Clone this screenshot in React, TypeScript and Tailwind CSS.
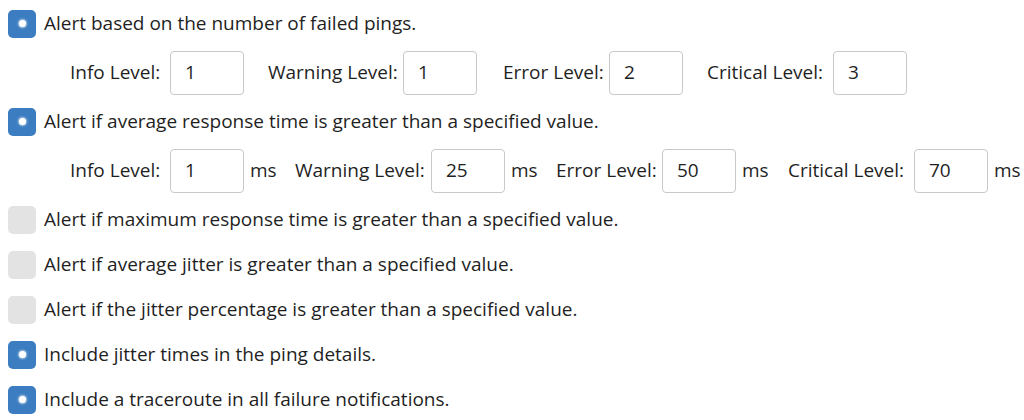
import React from "react";

function Check({ on }: { on: boolean }) {
  return on ? (
    <span className="flex h-[28px] w-[28px] shrink-0 items-center justify-center rounded-[5px] bg-[#3b7dc0]">
      <span className="h-[7px] w-[7px] rounded-full bg-white shadow-[0_0_2px_1px_rgba(255,255,255,0.6)]" />
    </span>
  ) : (
    <span className="h-[28px] w-[28px] shrink-0 rounded-[5px] bg-[#e3e3e3]" />
  );
}

function CheckRow({ on, text }: { on: boolean; text: string }) {
  return (
    <div className="flex h-[45px] items-center gap-[8px] pl-[8px]">
      <Check on={on} />
      <span>{text}</span>
    </div>
  );
}

function Box({ v }: { v: string }) {
  return (
    <span className="flex h-[44px] w-[74px] shrink-0 items-center rounded-[4px] border border-[#c9c9c9] bg-white pl-[14px]">
      {v}
    </span>
  );
}

function Field({ label, w, v, ms, msw }: { label: string; w: number; v: string; ms?: boolean; msw?: number }) {
  return (
    <div className="flex items-center">
      <span className="shrink-0 whitespace-nowrap" style={{ width: w }}>{label}</span>
      <Box v={v} />
      {ms && (
        <span className="shrink-0 pl-[6px]" style={{ width: msw }}>ms</span>
      )}
    </div>
  );
}

export default function App() {
  return (
    <div
      className="h-[420px] w-[1024px] overflow-hidden bg-white pt-[1px] text-[19px] text-[#1f1f1f]"
      style={{ fontFamily: '"Open Sans", "Noto Sans", sans-serif' }}
    >
      <CheckRow on text="Alert based on the number of failed pings." />
      <div className="flex h-[53px] items-center pl-[70px]">
        <Field label="Info Level:" w={100} v="1" />
        <div className="w-[24px]" />
        <Field label="Warning Level:" w={135} v="1" />
        <div className="w-[26px]" />
        <Field label="Error Level:" w={106} v="2" />
        <div className="w-[24px]" />
        <Field label="Critical Level:" w={126} v="3" />
      </div>
      <CheckRow on text="Alert if average response time is greater than a specified value." />
      <div className="flex h-[53px] items-center pl-[70px]">
        <Field label="Info Level:" w={100} v="1" ms msw={51} />
        <Field label="Warning Level:" w={136} v="25" ms msw={51} />
        <Field label="Error Level:" w={106} v="50" ms msw={52} />
        <Field label="Critical Level:" w={126} v="70" ms msw={40} />
      </div>
      <CheckRow on={false} text="Alert if maximum response time is greater than a specified value." />
      <CheckRow on={false} text="Alert if average jitter is greater than a specified value." />
      <CheckRow on={false} text="Alert if the jitter percentage is greater than a specified value." />
      <CheckRow on text="Include jitter times in the ping details." />
      <CheckRow on text="Include a traceroute in all failure notifications." />
    </div>
  );
}
